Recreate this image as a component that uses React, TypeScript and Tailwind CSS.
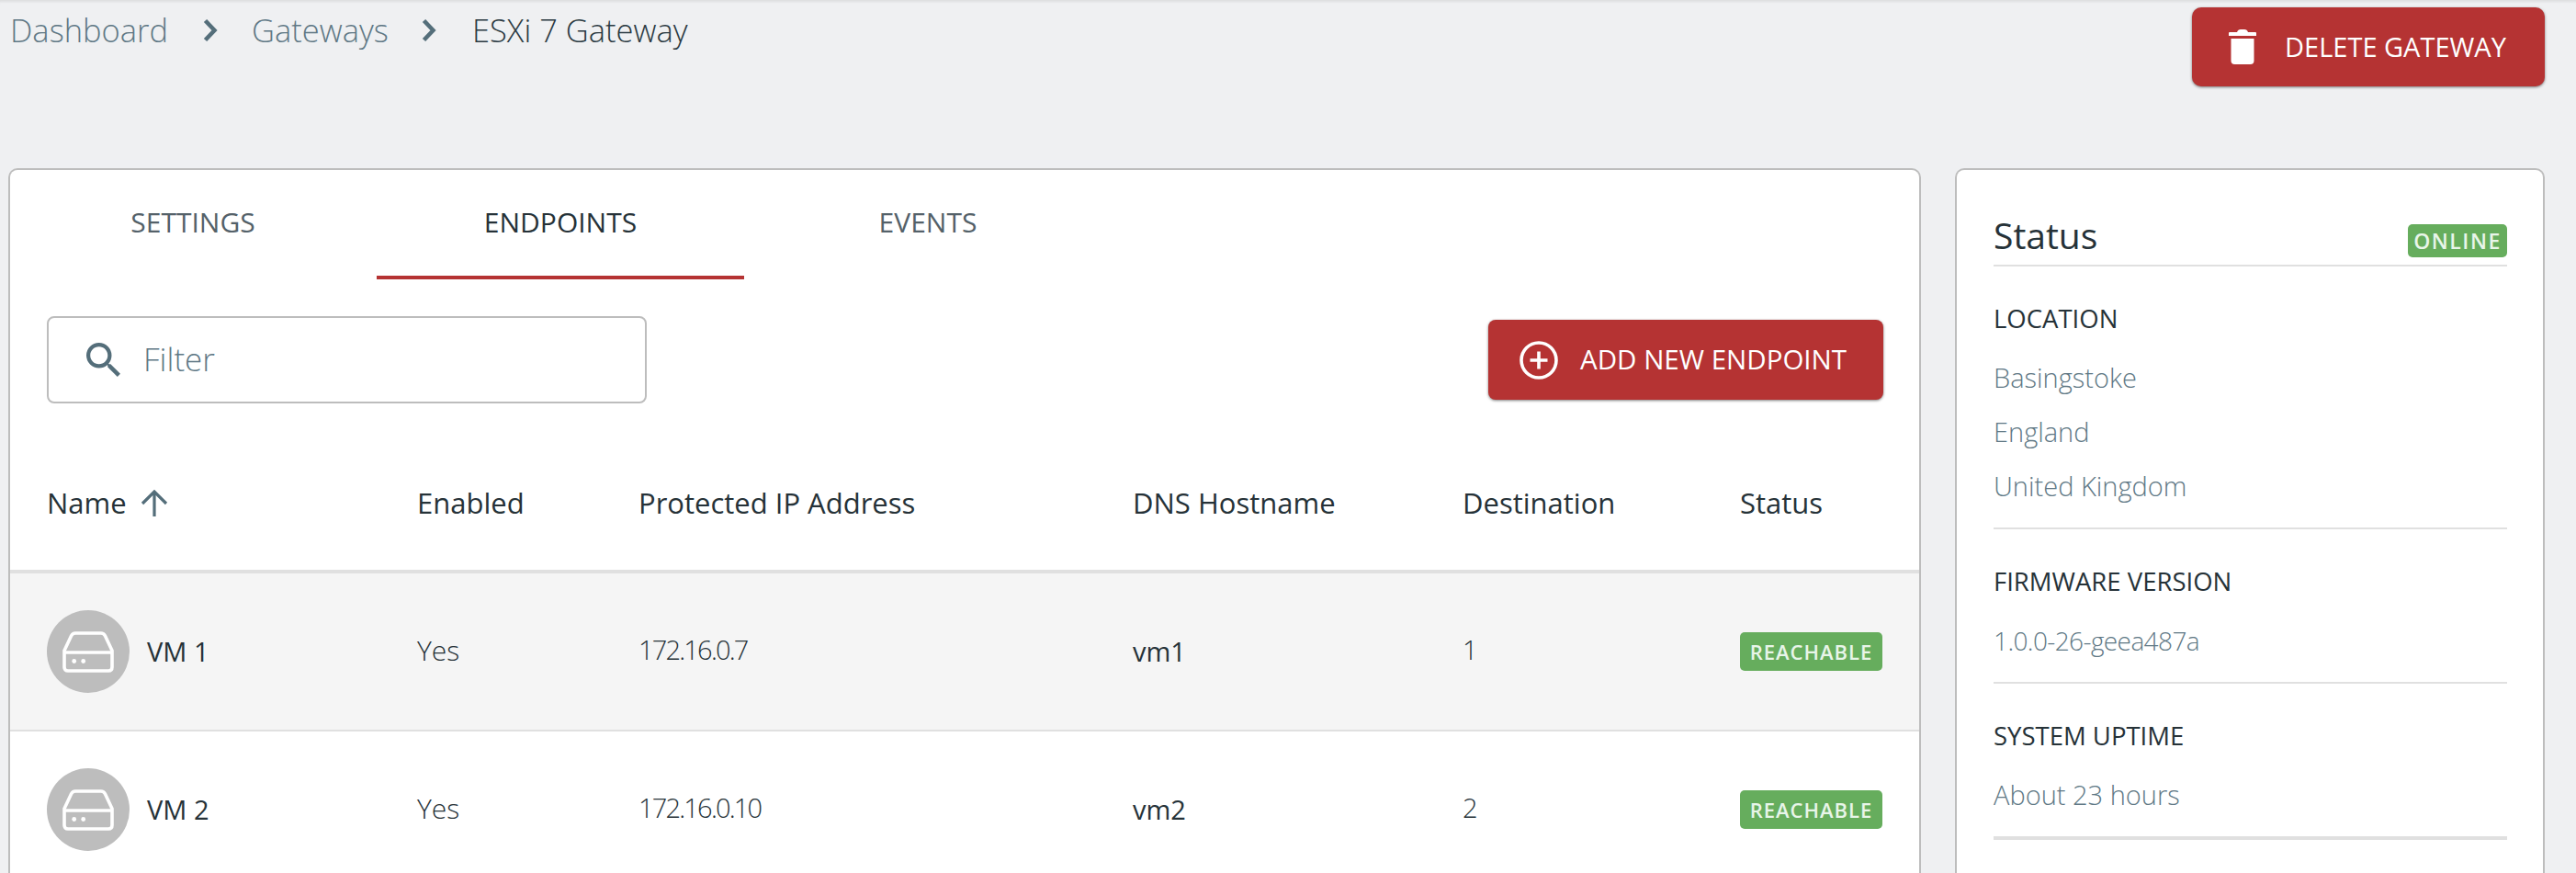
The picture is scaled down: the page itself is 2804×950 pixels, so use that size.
const Chevron = () => (
  <svg viewBox="0 0 16 24" className="w-[16px] h-[24px]" fill="none" stroke="#546e7a" strokeWidth="4.5">
    <path d="M2.5 1.5L12.5 12L2.5 22.5" />
  </svg>
);

const Trash = () => (
  <svg viewBox="0 0 30 38" className="w-[30px] h-[38px]" fill="#fff">
    <path d="M9 3 Q10 0 13 0 H17 Q20 0 21 3 H29 Q30 3 30 4 V7 H0 V4 Q0 3 1 3 Z" />
    <path d="M2.5 10 H27.5 V34 Q27.5 38 23.5 38 H6.5 Q2.5 38 2.5 34 Z" />
  </svg>
);

const Search = () => (
  <svg viewBox="3 3 17.5 17.5" className="w-[37px] h-[37px]" fill="#546e7a">
    <path d="M15.5 14h-.79l-.28-.27A6.471 6.471 0 0 0 16 9.5 6.5 6.5 0 1 0 9.5 16c1.61 0 3.09-.59 4.23-1.57l.27.28v.79l5 4.99L20.49 19l-4.99-5zm-6 0C7.01 14 5 11.99 5 9.5S7.01 5 9.5 5 14 7.01 14 9.5 11.99 14 9.5 14z" />
  </svg>
);

const PlusCircle = () => (
  <svg viewBox="0 0 42 42" className="w-[42px] h-[42px]" fill="none" stroke="#fff" strokeWidth="3.6">
    <circle cx="21" cy="21" r="19" />
    <path d="M21 11.5V30.5M11.5 21H30.5" />
  </svg>
);

const ArrowUp = () => (
  <svg viewBox="0 0 30 30" className="w-[30px] h-[30px]" fill="none" stroke="#546e7a" strokeWidth="3.2">
    <path d="M15 29V2M2 15L15 2L28 15" />
  </svg>
);

const Drive = () => (
  <svg viewBox="0 0 56 45" className="w-[56px] h-[45px]" fill="none" stroke="#fff" strokeWidth="3.6">
    <path d="M14 2H42Q45 2 46.5 5L54 21V39Q54 43 50 43H6Q2 43 2 39V21L9.5 5Q11 2 14 2Z" strokeLinejoin="round" />
    <path d="M2 23H54" />
    <circle cx="12.7" cy="32.5" r="2.4" fill="#fff" stroke="none" />
    <circle cx="22.7" cy="32.5" r="2.4" fill="#fff" stroke="none" />
  </svg>
);

const rows = [
  { name: "VM 1", ip: "172.16.0.7", host: "vm1", dest: "1", bg: "bg-[#f5f5f5]", border: "border-b-2" },
  { name: "VM 2", ip: "172.16.0.10", host: "vm2", dest: "2", bg: "bg-white", border: "border-b-2" },
];

const Section = ({ title, lines, last, compact }: { title: string; lines: string[]; last?: boolean; compact?: boolean }) => (
  <div className={`flex flex-col shrink-0 pb-[16px] border-[#e0e0e0] ${last ? "border-b-4" : "border-b-2"}`}>
    <div className="h-[40px] shrink-0 flex items-center text-[27.5px] leading-[40px] text-[#263238] font-normal mb-[14px]">{title}</div>
    {lines.map((l) => (
      <div key={l} className={`h-[59px] shrink-0 flex items-center font-light text-[#607885] ${compact ? "text-[28px] tracking-[-0.6px]" : "text-[29px]"}`}>{l}</div>
    ))}
  </div>
);

export default function App() {
  return (
    <div className="w-[2804px] h-[950px] overflow-hidden bg-[#eff0f2] font-['Open_Sans','Noto_Sans',sans-serif] shadow-[inset_0_4px_3px_-2px_rgba(0,0,0,0.08)]">
      <header className="h-[183px] flex justify-between items-start pl-[11px] pr-[34px]">
        <nav className="flex items-center h-[66px] text-[34.5px] font-light text-[#607885]">
          <span className="w-[210px]">Dashboard</span>
          <Chevron />
          <span className="ml-[37px] w-[185px]">Gateways</span>
          <Chevron />
          <span className="ml-[39px] text-[#2b3a42]">ESXi 7 Gateway</span>
        </nav>
        <button className="mt-[8px] w-[384px] h-[86px] flex items-center pl-[40px] rounded-[10px] bg-[#b53333] text-white text-[29px] shadow-[0_1px_3px_rgba(0,0,0,0.5)]">
          <Trash />
          <span className="ml-[31px]">DELETE GATEWAY</span>
        </button>
      </header>

      <main className="flex items-start pl-[9px] pr-[34px] gap-[37px]">
        <section className="w-[2082px] h-[767px] bg-white rounded-t-[10px] border-x-2 border-t-2 border-[#bdbdbd] flex flex-col shrink-0">
          <div className="flex h-[119px] shrink-0 -ml-[1px]">
            <div className="w-[400px] flex items-center justify-center h-[119px] pb-[6px] text-[30px] font-normal text-[#546169]">SETTINGS</div>
            <div className="w-[400px] flex items-center justify-center h-[119px] pb-[2px] text-[30px] font-normal text-[#263238] border-b-4 border-[#b53333]">ENDPOINTS</div>
            <div className="w-[400px] flex items-center justify-center h-[119px] pb-[6px] text-[30px] font-normal text-[#546169]">EVENTS</div>
          </div>

          <div className="flex justify-between items-center pl-[40px] pr-[39px] h-[95px] mt-[40px] shrink-0">
            <div className="w-[653px] h-[95px] flex items-center pl-[41px] rounded-[8px] border-2 border-[#bdbdbd]">
              <Search />
              <span className="ml-[25px] text-[35px] font-light text-[#607885]">Filter</span>
            </div>
            <button className="w-[430px] h-[87px] flex items-center pl-[34px] rounded-[8px] bg-[#b53333] text-white text-[29.5px] font-normal shadow-[0_1px_3px_rgba(0,0,0,0.5)]">
              <PlusCircle />
              <span className="ml-[24px]">ADD NEW ENDPOINT</span>
            </button>
          </div>

          <div className="grid grid-cols-[403px_241px_538px_359px_302px_155px] pl-[40px] h-[185px] shrink-0 items-center pt-[36px] border-b-4 border-[#e0e0e0] text-[31px] text-[#263238] font-normal">
            <div className="flex items-center gap-[15px]">
              <span>Name</span>
              <ArrowUp />
            </div>
            <div>Enabled</div>
            <div>Protected IP Address</div>
            <div>DNS Hostname</div>
            <div>Destination</div>
            <div>Status</div>
          </div>

          {rows.map((r) => (
            <div key={r.name} className={`grid grid-cols-[403px_241px_538px_359px_302px_155px] pl-[40px] h-[172px] shrink-0 items-center border-[#e0e0e0] ${r.bg} ${r.border}`}>
              <div className="flex items-center gap-[19px]">
                <div className="w-[90px] h-[90px] rounded-full bg-[#bdbdbd] flex items-center justify-center">
                  <Drive />
                </div>
                <span className="text-[29px] text-[#263238] font-normal">{r.name}</span>
              </div>
              <div className="text-[30px] font-light text-[#263238] pb-[4px]">Yes</div>
              <div className="text-[29px] font-light text-[#263238] tracking-[-1.8px] pb-[4px]">{r.ip}</div>
              <div className="text-[29px] font-normal text-[#263238]">{r.host}</div>
              <div className="text-[29px] font-light text-[#263238] pb-[4px]">{r.dest}</div>
              <div className="w-[155px] h-[42px] rounded-[5px] bg-[#66ad5d] text-[#e8f5e9] text-[22px] font-semibold tracking-[1px] flex items-center justify-center">REACHABLE</div>
            </div>
          ))}
        </section>

        <aside className="w-[642px] h-[767px] bg-white rounded-t-[10px] border-x-2 border-t-2 border-[#bdbdbd] pl-[40px] pr-[39px] pt-[59px] flex flex-col shrink-0">
          <div className="flex justify-between items-start border-b-2 border-[#e0e0e0] h-[46px] shrink-0">
            <span className="text-[39px] leading-[36px] -mt-[6px] text-[#263238] font-normal">Status</span>
            <span className="w-[108px] h-[36px] rounded-[5px] bg-[#66ad5d] text-[#e8f5e9] text-[23px] font-semibold tracking-[1.5px] flex items-center justify-center">ONLINE</span>
          </div>
          <div className="mt-[37px] shrink-0">
            <Section title="LOCATION" lines={["Basingstoke", "England", "United Kingdom"]} />
          </div>
          <div className="mt-[37px] shrink-0">
            <Section title="FIRMWARE VERSION" lines={["1.0.0-26-geea487a"]} compact />
          </div>
          <div className="mt-[37px] shrink-0">
            <Section title="SYSTEM UPTIME" lines={["About 23 hours"]} last />
          </div>
        </aside>
      </main>
    </div>
  );
}
